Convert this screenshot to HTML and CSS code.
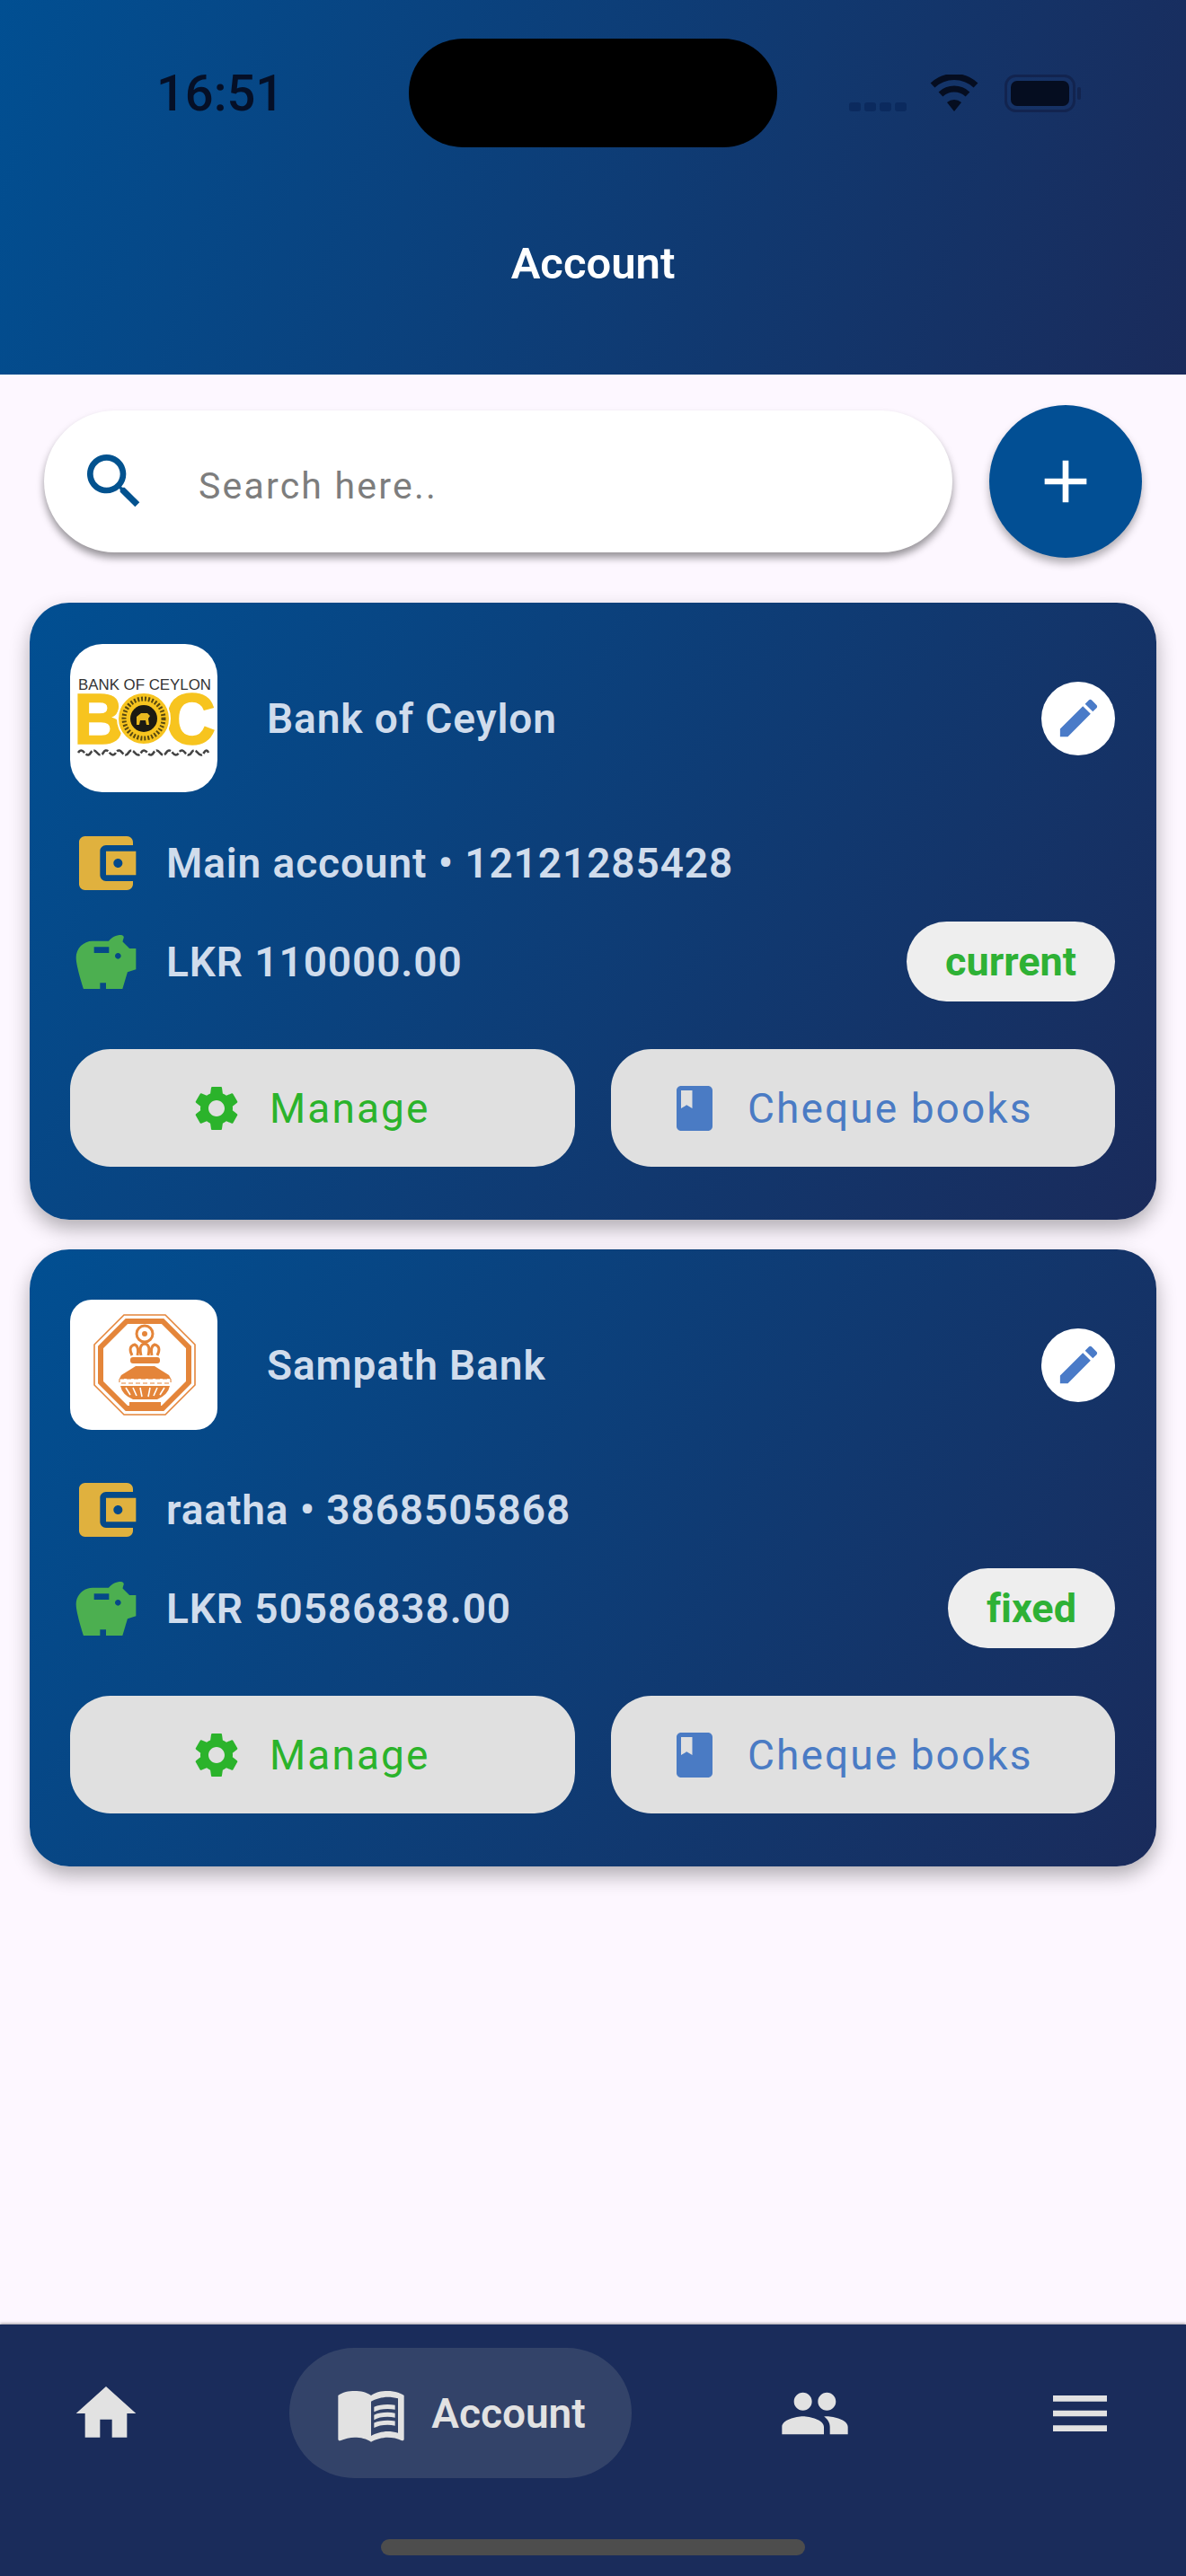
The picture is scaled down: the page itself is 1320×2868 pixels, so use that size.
FILE: index.html
```html
<!DOCTYPE html>
<html lang="en">
<head>
  <meta charset="UTF-8" />
  <meta name="viewport" content="width=device-width, initial-scale=1.0">
  <title>Account</title>
  <link rel="stylesheet" href="styles.css">
</head>
<body>
  <!-- icon set -->
  <svg class="icon-defs" width="0" height="0">
    <symbol id="i-wallet" viewBox="0 0 24 24"><path d="M21 18v1c0 1.1-.9 2-2 2H5c-1.11 0-2-.9-2-2V5c0-1.1.89-2 2-2h14c1.1 0 2 .9 2 2v1h-9c-1.11 0-2 .9-2 2v8c0 1.1.89 2 2 2h9zm-9-2h10V8H12v8zm4-2.5c-.83 0-1.5-.67-1.5-1.5s.67-1.5 1.5-1.5 1.5.67 1.5 1.5-.67 1.5-1.5 1.5z"/></symbol>
    <symbol id="i-savings" viewBox="0 0 24 24"><path d="M19.83 7.5l-2.27-2.27c.07-.42.18-.81.32-1.15.11-.26.04-.56-.15-.75-.19-.19-.45-.33-.73-.33-1.66 0-3.14.79-4.1 2H7.5C4.46 5 2 7.46 2 10.5 2 13.5 4.5 21 4.5 21H10v-2h2v2h5.5l1.68-5.59 2.82-.94V7.5h-2.17zM13 9H8V7h5v2zm3 2c-.55 0-1-.45-1-1s.45-1 1-1 1 .45 1 1-.45 1-1 1z"/></symbol>
    <symbol id="i-edit" viewBox="0 0 24 24"><path d="M3 17.25V21h3.75L17.81 9.94l-3.75-3.75L3 17.25zM20.71 7.04c.39-.39.39-1.02 0-1.41l-2.34-2.34c-.39-.39-1.02-.39-1.41 0l-1.83 1.83 3.75 3.75 1.83-1.83z"/></symbol>
    <symbol id="i-gear" viewBox="0 0 24 24"><path d="M19.14 12.94c.04-.3.06-.61.06-.94 0-.32-.02-.64-.07-.94l2.03-1.58c.18-.14.23-.41.12-.61l-1.92-3.32c-.12-.22-.37-.29-.59-.22l-2.39.96c-.5-.38-1.03-.7-1.62-.94l-.36-2.54c-.04-.24-.24-.41-.48-.41h-3.84c-.24 0-.43.17-.47.41l-.36 2.54c-.59.24-1.13.57-1.62.94l-2.39-.96c-.22-.08-.47 0-.59.22L2.74 8.87c-.12.21-.08.47.12.61l2.03 1.58c-.05.3-.09.63-.09.94s.02.64.07.94l-2.03 1.58c-.18.14-.23.41-.12.61l1.92 3.32c.12.22.37.29.59.22l2.39-.96c.5.38 1.03.7 1.62.94l.36 2.54c.05.24.24.41.48.41h3.84c.24 0 .44-.17.47-.41l.36-2.54c.59-.24 1.13-.56 1.62-.94l2.39.96c.22.08.47 0 .59-.22l1.92-3.32c.12-.22.07-.47-.12-.61l-2.01-1.58zM12 15.6c-1.98 0-3.6-1.62-3.6-3.6s1.62-3.6 3.6-3.6 3.6 1.62 3.6 3.6-1.62 3.6-3.6 3.6z"/></symbol>
    <symbol id="i-book" viewBox="0 0 24 24"><path d="M18 2H6c-1.1 0-2 .9-2 2v16c0 1.1.9 2 2 2h12c1.1 0 2-.9 2-2V4c0-1.1-.9-2-2-2zM6 4h5v8l-2.5-1.5L6 12V4z"/></symbol>
  </svg>

  <div class="page">
    <header class="app-header">
      <div class="status-bar">
        <span class="clock">16:51</span>
        <div class="island"></div>
        <div class="status-icons">
          <svg class="signal" viewBox="0 0 65 10"><rect x="0" width="13" height="10" rx="3"/><rect x="17" width="13" height="10" rx="3"/><rect x="34" width="13" height="10" rx="3"/><rect x="51" width="13" height="10" rx="3"/></svg>
          <svg class="wifi" viewBox="0 0 56 42"><path d="M28 41 20 31a12 12 0 0 1 16 0z"/><path class="wifi-arc" d="M13 22a22 22 0 0 1 30 0"/><path class="wifi-arc" d="M4 12a35 35 0 0 1 48 0"/></svg>
          <svg class="battery" viewBox="0 0 85 42"><rect x="1.5" y="1.5" width="76" height="39" rx="11" class="batt-edge"/><rect x="7" y="7" width="65" height="28" rx="7"/><rect x="81" y="14" width="4" height="14" rx="2" class="batt-cap"/></svg>
        </div>
      </div>
      <h1 class="app-title">Account</h1>
    </header>

    <main class="content">
      <div class="search-row">
        <div class="search-box">
          <svg class="search-icon" viewBox="0 0 24 24"><path d="M15.5 14h-.79l-.28-.27C15.41 12.59 16 11.11 16 9.5 16 5.91 13.09 3 9.5 3S3 5.91 3 9.5 5.91 16 9.5 16c1.61 0 3.09-.59 4.23-1.57l.27.28v.79l5 4.99L20.49 19l-4.99-5zm-6 0C7.01 14 5 11.99 5 9.5S7.01 5 9.5 5 14 7.01 14 9.5 11.99 14 9.5 14z"/></svg>
          <span class="search-hint">Search here..</span>
        </div>
        <button class="add-btn" type="button">
          <svg viewBox="0 0 24 24"><path d="M19 13h-6v6h-2v-6H5v-2h6V5h2v6h6v2z"/></svg>
        </button>
      </div>

      <section class="account-list">
        <article class="account-card">
          <div class="bank-row">
            <div class="logo-slot">
              <svg class="bank-logo" viewBox="0 0 164 165">
                <text class="boc-name" x="9" y="51" textLength="148" lengthAdjust="spacingAndGlyphs">BANK OF CEYLON</text>
                <text class="boc-letter" x="4" y="111" textLength="56" lengthAdjust="spacingAndGlyphs">B</text>
                <text class="boc-letter" x="106" y="111" textLength="56" lengthAdjust="spacingAndGlyphs">C</text>
                <circle cx="82" cy="83" r="29" fill="#f7c41f" stroke="#fff" stroke-width="2"/>
                <circle cx="82" cy="83" r="22" fill="none" stroke="#5a4a10" stroke-width="5" stroke-dasharray="2 2"/>
                <circle cx="82" cy="83" r="15" fill="#1c1a12"/>
                <path d="M74 90v-9l5-4h7l3 3-2 3 1 7h-3l-1-5h-6l-1 5z" fill="#e9b81f"/>
                <path d="M9 121q3-5 7 0t7 0 7 0 7 0 7 0 7 0 7 0 7 0 7 0 7 0 7 0 7 0 7 0 7 0 7 0 7 0 7 0 7 0 7 0 7 0 5 0" fill="none" stroke="#444" stroke-width="2.6" stroke-dasharray="9 2"/>
              </svg>
            </div>
            <h2 class="bank-name">Bank of Ceylon</h2>
            <button class="edit-btn" type="button"><svg><use href="#i-edit"/></svg></button>
          </div>
          <div class="info-row">
            <svg class="info-icon wallet"><use href="#i-wallet"/></svg>
            <span class="info-text">Main account • 12121285428</span>
          </div>
          <div class="info-row balance-row">
            <svg class="info-icon piggy"><use href="#i-savings"/></svg>
            <span class="info-text">LKR 110000.00</span>
            <span class="type-pill">current</span>
          </div>
          <div class="card-actions">
            <button class="action-btn manage" type="button"><svg><use href="#i-gear"/></svg>Manage</button>
            <button class="action-btn cheque" type="button"><svg><use href="#i-book"/></svg>Cheque books</button>
          </div>
        </article>

        <article class="account-card">
          <div class="bank-row">
            <div class="logo-slot">
              <svg class="bank-logo logo-short" viewBox="0 0 164 145">
                <polygon points="60,17 106,17 139,50 139,95 106,128 60,128 27,95 27,50" fill="none" stroke="#e4853a" stroke-width="1.6"/>
                <polygon points="63,24 103,24 132,53 132,92 103,121 63,121 34,92 34,53" fill="none" stroke="#e4853a" stroke-width="6"/>
                <circle cx="83" cy="38" r="9" fill="none" stroke="#e4853a" stroke-width="3"/>
                <circle cx="83" cy="38" r="3" fill="#e4853a"/>
                <path d="M69 62q-5-10 3-12 5 2 3 12M79 62q-3-12 4-13 7 1 4 13M97 62q5-10-3-12-5 2-3 12" fill="none" stroke="#e4853a" stroke-width="3"/>
                <rect x="67" y="64" width="33" height="7" rx="3" fill="#e4853a"/>
                <path d="M73 74h21l16 10q3 4 2 9H55q-1-5 2-9z" fill="#e4853a"/>
                <rect x="55" y="88" width="57" height="5" fill="#fff" stroke="#e4853a" stroke-width="1" stroke-dasharray="5 3"/>
                <path d="M56 96h55q-2 10-14 15H70q-12-5-14-15z" fill="#e4853a"/>
                <path d="M62 98l5 8M70 98l4 9M78 98l2 10M89 98l-2 10M97 98l-4 9M105 98l-5 8" stroke="#fff" stroke-width="1.6"/>
                <rect x="66" y="114" width="35" height="6" fill="#e4853a"/>
              </svg>
            </div>
            <h2 class="bank-name">Sampath Bank</h2>
            <button class="edit-btn" type="button"><svg><use href="#i-edit"/></svg></button>
          </div>
          <div class="info-row">
            <svg class="info-icon wallet"><use href="#i-wallet"/></svg>
            <span class="info-text">raatha • 3868505868</span>
          </div>
          <div class="info-row balance-row">
            <svg class="info-icon piggy"><use href="#i-savings"/></svg>
            <span class="info-text">LKR 50586838.00</span>
            <span class="type-pill">fixed</span>
          </div>
          <div class="card-actions">
            <button class="action-btn manage" type="button"><svg><use href="#i-gear"/></svg>Manage</button>
            <button class="action-btn cheque" type="button"><svg><use href="#i-book"/></svg>Cheque books</button>
          </div>
        </article>
      </section>
    </main>

    <nav class="bottom-nav">
      <div class="nav-items">
        <svg class="nav-icon" viewBox="0 0 24 24"><path d="M10 20v-6h4v6h5v-8h3L12 3 2 12h3v8z"/></svg>
        <div class="nav-active">
          <svg class="nav-icon" viewBox="0 0 24 24"><path d="M21 5c-1.11-.35-2.33-.5-3.5-.5-1.95 0-4.05.4-5.5 1.5-1.45-1.1-3.55-1.5-5.5-1.5S2.45 4.9 1 6v14.65c0 .25.25.5.5.5.1 0 .15-.05.25-.05C3.1 20.45 5.05 20 6.5 20c1.95 0 4.05.4 5.5 1.5 1.35-.85 3.8-1.5 5.5-1.5 1.65 0 3.35.3 4.75 1.05.1.05.15.05.25.05.25 0 .5-.25.5-.5V6c-.6-.45-1.25-.75-2-1zm0 13.5c-1.1-.35-2.3-.5-3.5-.5-1.7 0-4.15.65-5.5 1.5V8c1.35-.85 3.8-1.5 5.5-1.5 1.2 0 2.4.15 3.5.5v11.5z"/><path d="M17.5 10.5c.88 0 1.73.09 2.5.26V9.24c-.79-.15-1.64-.24-2.5-.24-1.7 0-3.24.29-4.5.83v1.66c1.13-.64 2.7-.99 4.5-.99zM13 12.49v1.66c1.13-.64 2.7-.99 4.5-.99.88 0 1.73.09 2.5.26V11.9c-.79-.15-1.64-.24-2.5-.24-1.7 0-3.24.3-4.5.83zM17.5 14.33c-1.7 0-3.24.29-4.5.83v1.66c1.13-.64 2.7-.99 4.5-.99.88 0 1.73.09 2.5.26v-1.52c-.79-.16-1.64-.24-2.5-.24z"/></svg>
          <span>Account</span>
        </div>
        <svg class="nav-icon" viewBox="0 0 24 24"><path d="M16 11c1.66 0 2.99-1.34 2.99-3S17.66 5 16 5c-1.66 0-3 1.34-3 3s1.34 3 3 3zm-8 0c1.66 0 2.99-1.34 2.99-3S9.66 5 8 5C6.34 5 5 6.34 5 8s1.34 3 3 3zm0 2c-2.33 0-7 1.17-7 3.5V19h14v-2.5c0-2.33-4.67-3.5-7-3.5zm8 0c-.29 0-.62.02-.97.05 1.16.84 1.97 1.97 1.97 3.45V19h6v-2.5c0-2.33-4.67-3.5-7-3.5z"/></svg>
        <svg class="nav-icon nav-last" viewBox="0 0 24 24"><path d="M3 18h18v-2H3v2zm0-5h18v-2H3v2zm0-7v2h18V6H3z"/></svg>
      </div>
      <div class="home-bar"></div>
    </nav>
  </div>
</body>
</html>
```

FILE: styles.css
```css
* {
  box-sizing: border-box;
}
body {
  margin: 0;
  font-family: Roboto, "Liberation Sans", sans-serif;
  background: #fdf7ff;
}
.icon-defs {
  position: absolute;
}
.page {
  width: 1320px;
  height: 2868px;
  display: flex;
  flex-direction: column;
  overflow: hidden;
}

/* header */
.app-header {
  height: 417px;
  background: linear-gradient(107.5deg, #014f92 0%, #1a2b5b 100%);
}
.status-bar {
  display: flex;
  align-items: center;
  height: 121px;
  margin-top: 43px;
  padding-left: 174px;
}
.clock {
  width: 281px;
  font-size: 56px;
  font-weight: 500;
  color: #050f26;
}
.island {
  width: 410px;
  height: 121px;
  border-radius: 60px;
  background: #000;
}
.status-icons {
  display: flex;
  align-items: center;
  margin-left: 80px;
}
.signal {
  width: 65px;
  height: 10px;
  margin: 30px 24px 0 0;
  fill: #0b2a5e;
}
.wifi {
  width: 56px;
  height: 42px;
  margin-right: 28px;
  fill: #050d20;
}
.wifi-arc {
  fill: none;
  stroke: #050d20;
  stroke-width: 7;
}
.battery {
  width: 85px;
  height: 42px;
  fill: #050d20;
}
.batt-edge {
  fill: none;
  stroke: #12244f;
  stroke-width: 3;
}
.batt-cap {
  fill: #12244f;
}
.app-title {
  margin: 103px 0 0;
  text-align: center;
  font-size: 49px;
  line-height: 54px;
  font-weight: 600;
  color: #fff;
}

/* search */
.content {
  flex: 1;
  padding: 34px 33px 0;
}
.search-row {
  display: flex;
  align-items: center;
  gap: 41px;
  padding: 0 16px;
}
.search-box {
  flex: 1;
  height: 158px;
  display: flex;
  align-items: center;
  gap: 54px;
  padding-left: 38px;
  background: #fff;
  border-radius: 79px;
  box-shadow: 0 6px 8px rgba(0,0,0,0.4);
}
.search-icon {
  width: 80px;
  height: 80px;
  fill: #02528f;
}
.search-hint {
  padding-top: 10px;
  font-size: 41px;
  letter-spacing: 2.2px;
  color: #7d7d7d;
}
.add-btn {
  width: 170px;
  height: 170px;
  padding: 0;
  border: none;
  border-radius: 50%;
  background: #024f94;
  box-shadow: 0 6px 10px rgba(0,0,0,0.3);
  display: flex;
  align-items: center;
  justify-content: center;
}
.add-btn svg {
  width: 80px;
  height: 80px;
  fill: #fff;
}

/* account cards */
.account-list {
  display: flex;
  flex-direction: column;
  gap: 33px;
  margin-top: 50px;
}
.account-card {
  height: 687px;
  padding: 46px 46px 0 45px;
  border-radius: 44px;
  background: linear-gradient(118.7deg, #014f92 0%, #1a2b5b 100%);
  box-shadow: 0 10px 22px rgba(0,0,0,0.3);
}
.bank-row {
  display: flex;
  align-items: center;
  height: 165px;
}
.logo-slot {
  width: 164px;
  margin-right: 55px;
  display: flex;
  align-items: center;
}
.bank-logo {
  display: block;
  width: 164px;
  height: 165px;
  background: #fff;
  border-radius: 36px;
}
.logo-short {
  height: 145px;
  border-radius: 24px;
}
.boc-name {
  font-family: "Liberation Sans", sans-serif;
  font-size: 16px;
  fill: #333;
}
.boc-letter {
  font-family: "Liberation Sans", sans-serif;
  font-size: 79px;
  font-weight: 700;
  fill: #f7c41f;
  stroke: #f7c41f;
  stroke-width: 1.5px;
}
.bank-name {
  margin: 0;
  font-size: 46px;
  font-weight: 600;
  letter-spacing: 0.9px;
  color: #d0dcec;
}
.edit-btn {
  width: 82px;
  height: 82px;
  margin-left: auto;
  padding: 0;
  border: none;
  border-radius: 50%;
  background: #fff;
  display: flex;
  align-items: center;
  justify-content: center;
}
.edit-btn svg {
  width: 55px;
  height: 55px;
  fill: #4a7bc8;
}
.info-row {
  display: flex;
  align-items: center;
  margin-top: 39px;
  gap: 27px;
}
.balance-row {
  margin-top: 25px;
}
.info-icon {
  width: 80px;
  height: 80px;
  flex: none;
}
.wallet {
  fill: #e0b13e;
}
.piggy {
  fill: #4caf50;
}
.info-text {
  font-size: 46px;
  font-weight: 600;
  letter-spacing: 0.9px;
  color: #d0dcec;
}
.type-pill {
  height: 89px;
  margin-left: auto;
  padding: 0 43px;
  display: flex;
  align-items: center;
  border-radius: 45px;
  background: #eeeeee;
  font-size: 45px;
  font-weight: 700;
  font-variant-ligatures: none;
  color: #2eb135;
}
.card-actions {
  display: flex;
  gap: 40px;
  margin-top: 53px;
}
.action-btn {
  flex: 1;
  height: 131px;
  display: flex;
  align-items: center;
  justify-content: center;
  gap: 29px;
  padding: 0 28px 0 0;
  border: none;
  border-radius: 45px;
  background: #e0e0e0;
  font-family: Roboto, "Liberation Sans", sans-serif;
  font-size: 46px;
  letter-spacing: 2.1px;
}
.action-btn svg {
  width: 60px;
  height: 60px;
  fill: currentColor;
}
.manage {
  color: #2bb32b;
}
.cheque {
  color: #4a7bc4;
}

/* bottom nav */
.bottom-nav {
  height: 280px;
  background: #1a2c5b;
  box-shadow: 0 -1px 3px rgba(0,0,0,0.4);
}
.nav-items {
  display: flex;
  align-items: center;
  gap: 164px;
  padding: 26px 78px 0;
}
.nav-icon {
  width: 80px;
  height: 80px;
  flex: none;
  fill: #e2e2e2;
}
.nav-last {
  margin-left: auto;
}
.nav-active {
  width: 381px;
  height: 145px;
  display: flex;
  align-items: center;
  justify-content: center;
  gap: 27px;
  border-radius: 72px;
  background: #334369;
  font-size: 46px;
  font-weight: 600;
  color: #e2e2e2;
}
.home-bar {
  width: 472px;
  height: 18px;
  margin: 68px auto 0;
  border-radius: 9px;
  background: #4d4d4d;
}
```
